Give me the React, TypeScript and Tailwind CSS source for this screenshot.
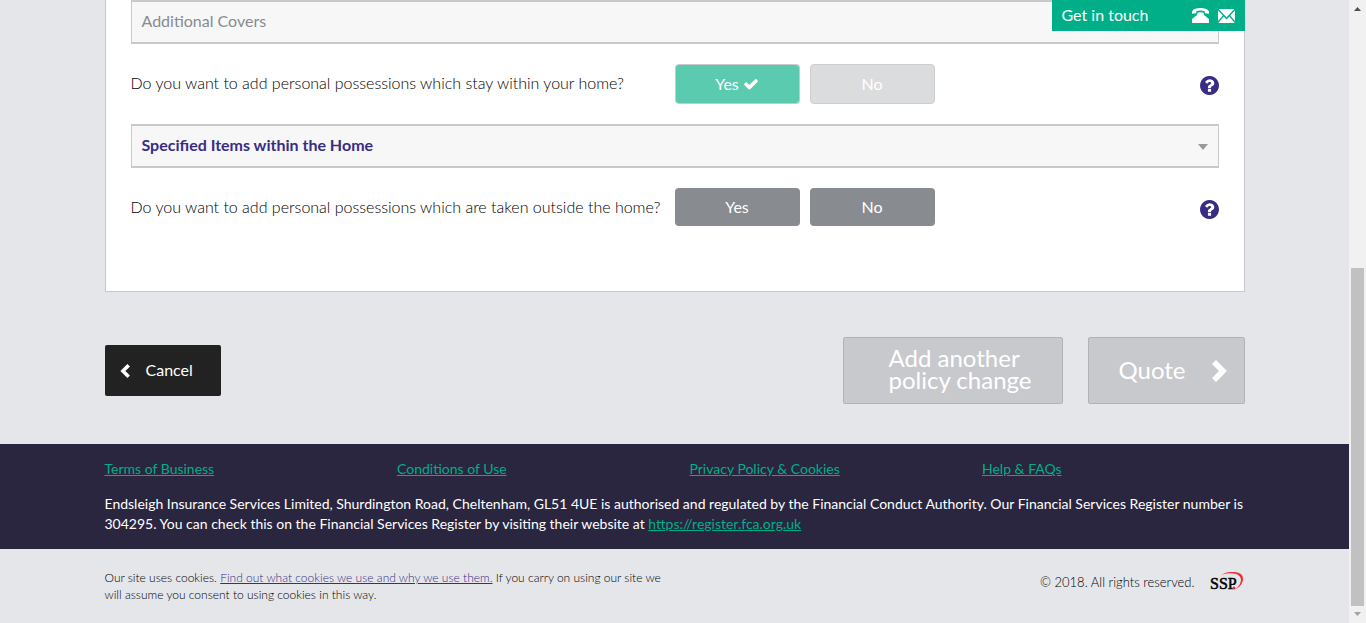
import React, { useState } from "react";

function QuestionIcon() {
  return (
    <svg viewBox="128 128 1536 1536" className="size-[19px] fill-[#372d84]" aria-hidden="true">
      <path d="M1024 1376v-192q0-14-9-23t-23-9h-192q-14 0-23 9t-9 23v192q0 14 9 23t23 9h192q14 0 23-9t9-23zm256-672q0-88-55.5-163t-138.5-116-170-41q-243 0-371 213-15 24 8 42l132 100q7 6 19 6 16 0 25-12 53-68 86-92 34-24 86-24 48 0 85.5 26t37.5 59q0 38-20 61t-68 45q-63 28-115.5 86.5t-52.5 125.5v36q0 14 9 23t23 9h192q14 0 23-9t9-23q0-19 21.5-49.5t54.5-49.5q32-18 49-28.5t46-35 44.5-48 28-60.5 12.5-81zm384 192q0 209-103 385.5t-279.5 279.5-385.5 103-385.5-103-279.5-279.5-103-385.5 103-385.5 279.5-279.5 385.5-103 385.5 103 279.5 279.5 103 385.5z" />
    </svg>
  );
}

function CheckIcon() {
  return (
    <svg viewBox="0 0 1792 1792" className="size-4 fill-white" aria-hidden="true">
      <path d="M1671 566q0 40-28 68l-724 724-136 136q-28 28-68 28t-68-28l-136-136-362-362q-28-28-28-68t28-68l136-136q28-28 68-28t68 28l294 295 656-657q28-28 68-28t68 28l136 136q28 28 28 68z" />
    </svg>
  );
}

function PhoneIcon() {
  return (
    <svg viewBox="0 0 17 15" className="h-[15px] w-[17px] fill-white" aria-hidden="true">
      <path d="M0 5.8V3.4C1.2 1 4.6 0 8.5 0S15.8 1 17 3.4V5.8L12.800 5.200V3.2C10.200 2.300 6.800 2.300 4.200 3.200V5.200Z" />
      <path d="M5.500 4.800C7 4 10 4 11.500 4.800L12 7L17 11V15H0V11L5 7Z" />
    </svg>
  );
}

function MailIcon() {
  return (
    <svg viewBox="0 0 17 14" className="h-[14px] w-[17px] fill-white" aria-hidden="true">
      <path d="M.6 0H16.400L8.500 8.200ZM0 1.400 4.800 6.600 0 12ZM17 1.400V12L12.200 6.600ZM5.700 7.600 8.500 10.500 11.300 7.600 16.800 14H.2Z" />
    </svg>
  );
}

function ChevronLeft() {
  return (
    <svg viewBox="0 0 10 14" className="h-[14px] w-[10px] fill-white" aria-hidden="true">
      <path d="M7.400 0 10 2.600 5.400 7 10 11.400 7.400 14 .4 7Z" />
    </svg>
  );
}

function ChevronRight() {
  return (
    <svg viewBox="0 0 15 22" className="h-[22px] w-[15px] fill-white" aria-hidden="true">
      <path d="M4 0 0 4 7 11 0 18 4 22 15 11Z" />
    </svg>
  );
}

function SspLogo() {
  return (
    <svg viewBox="0 1 34 20" className="h-5 w-[34px]" role="img" aria-label="SSP">
      <path d="M11 4.200C16 .6 25 -.2 30 2.600 35.500 6 33 14.500 25.500 18.300 31 14 33 7.500 28.500 4.200 24.500 1.600 17 1.600 11 4.200Z" fill="#ef2b2d" />
      <text x="0" y="18" fontSize="16" fontFamily="Liberation Serif, serif" fill="#000" stroke="#000" strokeWidth="0.500">SSP</text>
      <circle cx="24" cy="17" r="1.500" fill="#ef2b2d" />
    </svg>
  );
}

type QuestionProps = { id: string; text: string; initial: "yes" | null };

function Question({ id, text, initial }: QuestionProps) {
  const [answer, setAnswer] = useState<"yes" | "no" | null>(initial);
  const base = "flex w-[125px] items-center justify-center gap-1 rounded-[4px] text-white";
  const open = "h-[38px] bg-[#888b90]";
  const chosen = "h-10 border border-[#c8c9cd] bg-[#5bcbb0]";
  const other = "h-10 border border-[#cdced0] bg-[#dbdcde]";
  const style = (value: "yes" | "no") => (answer === null ? open : answer === value ? chosen : other);
  return (
    <div role="group" aria-labelledby={id} className="flex h-20 items-start pt-5">
      <p id={id} className="w-[544px] leading-[38px] font-light text-black">{text}</p>
      <div className="flex gap-[10px]">
        <button type="button" aria-pressed={answer === "yes"} onClick={() => setAnswer("yes")} className={`${base} ${style("yes")}`}>
          Yes{answer === "yes" && <CheckIcon />}
        </button>
        <button type="button" aria-pressed={answer === "no"} onClick={() => setAnswer("no")} className={`${base} ${style("no")}`}>
          No{answer === "no" && <CheckIcon />}
        </button>
      </div>
      <button type="button" aria-label="Help" className="mt-3 ml-auto">
        <QuestionIcon />
      </button>
    </div>
  );
}

const section = "flex h-11 w-full items-center justify-between border-x border-y-2 border-[#c8c9cd] bg-[#f7f7f7] px-[10px] text-left";
const bigButton = "flex h-[67px] items-center rounded-[2px] border border-[#b1b3b7] bg-[#c8c9cd] text-2xl text-white";
const links = ["Terms of Business", "Conditions of Use", "Privacy Policy & Cookies", "Help & FAQs"];

export default function App() {
  return (
    <div className="flex min-h-screen bg-[#e5e6ea] font-[Lato,sans-serif] text-base">
      <div className="min-w-0 flex-1">
        <div className="relative mx-auto max-w-[1140px]">
          <main className="border-x border-b border-[#c8c9cd] bg-white px-[25px] pb-[43px]">
            <button type="button" className={`${section} text-[#888b90]`}>
              <span className="pb-[2px]">Additional Covers</span>
            </button>
            <Question id="inside" text="Do you want to add personal possessions which stay within your home?" initial="yes" />
            <button type="button" className={`${section} font-bold text-[#372d84]`}>
              <span className="pb-[2px]">Specified Items within the Home</span>
              <svg viewBox="0 0 10 8" className="h-2 w-[10px] fill-[#999]" aria-hidden="true">
                <path d="M0 2H10L5 8Z" />
              </svg>
            </button>
            <Question id="outside" text="Do you want to add personal possessions which are taken outside the home?" initial={null} />
          </main>
          <aside className="absolute top-0 right-0 flex h-[31px] w-[193px] items-center bg-[#00ae87] px-[10px] text-white">
            <span className="flex-1 pb-[2px]">Get in touch</span>
            <a href="#phone" aria-label="Call us" className="mr-[9px]"><PhoneIcon /></a>
            <a href="#email" aria-label="Email us"><MailIcon /></a>
          </aside>
        </div>

        <div className="mx-auto flex max-w-[1140px] items-center pt-[45px] pb-10">
          <button type="button" className="flex h-[51px] w-[116px] items-center gap-4 rounded-[2px] bg-[#222] pl-[15px] text-white">
            <ChevronLeft />
            <span className="pb-[2px]">Cancel</span>
          </button>
          <button type="button" className={`${bigButton} ml-auto w-[220px] pl-[45px] text-left leading-[22px]`}>
            <span className="pb-[4px]">Add another<br />policy change</span>
          </button>
          <button type="button" className={`${bigButton} ml-[25px] w-[157px] justify-between pr-[17px] pl-[30px]`}>
            <span className="pb-[2px]">Quote</span>
            <ChevronRight />
          </button>
        </div>

        <footer>
          <div className="bg-[#2a2640] py-[15px] text-sm leading-5 text-white">
            <div className="mx-auto max-w-[1140px]">
              <nav className="-mr-[30px] grid grid-cols-4">
                {links.map((label) => (
                  <a key={label} href="#" className="justify-self-start text-[#00ae87] underline">{label}</a>
                ))}
              </nav>
              <p className="mt-[15px]">
                Endsleigh Insurance Services Limited, Shurdington Road, Cheltenham, GL51 4UE is authorised and regulated by the Financial Conduct Authority. Our Financial Services Register number is 304295. You can check this on the Financial Services Register by visiting their website at{" "}
                <a href="https://register.fca.org.uk" className="text-[#00ae87] underline">https://register.fca.org.uk</a>
              </p>
            </div>
          </div>
          <div className="mx-auto flex max-w-[1140px] justify-between pt-5 font-light text-black">
            <p className="max-w-[570px] text-xs leading-[17px]">
              Our site uses cookies. <a href="#cookies" className="text-[#372d84] underline">Find out what cookies we use and why we use them.</a> If you carry on using our site we will assume you consent to using cookies in this way.
            </p>
            <div className="flex items-start gap-[15px] pt-[3px] pr-px">
              <p className="text-[13px] leading-5">© 2018. All rights reserved.</p>
              <SspLogo />
            </div>
          </div>
        </footer>
      </div>

      <div aria-hidden="true" className="flex w-[17px] flex-col items-center bg-[#f1f1f1]">
        <svg viewBox="0 0 17 17" className="size-[17px] fill-[#505050]"><path d="M5 11H12L8.500 7Z" /></svg>
        <div className="flex w-full flex-1 flex-col px-[2px]">
          <div className="grow-[251]" />
          <div className="grow-[338] bg-[#c1c1c1]" />
        </div>
        <svg viewBox="0 0 17 17" className="size-[17px] fill-[#a3a3a3]"><path d="M5 6H12L8.500 10Z" /></svg>
      </div>
    </div>
  );
}
